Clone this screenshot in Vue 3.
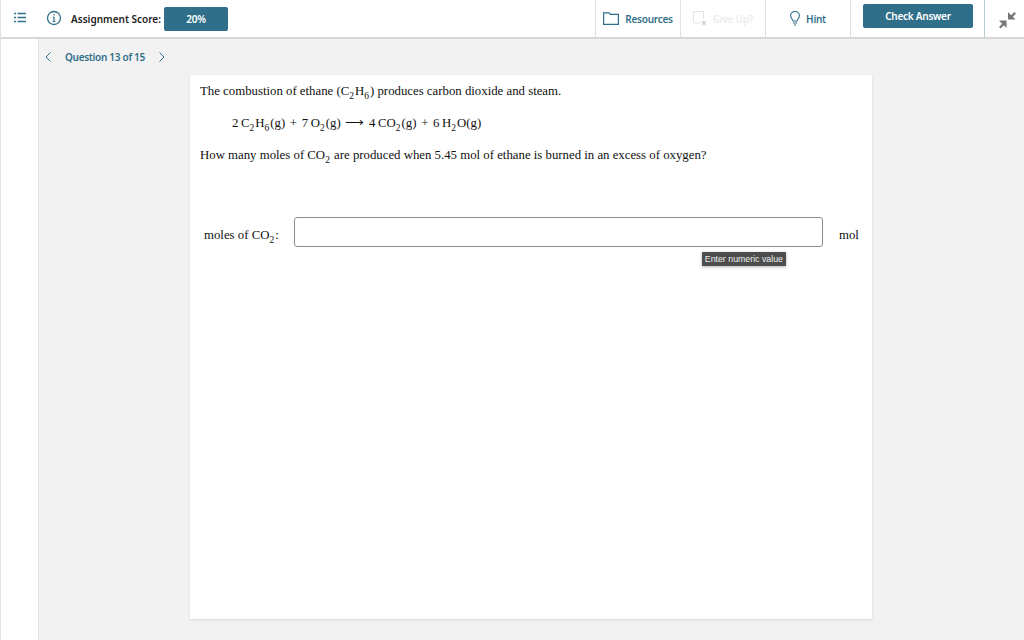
<script setup>
const tools = [
  { name: 'Resources', kind: 'folder', off: false },
  { name: 'Give Up?', kind: 'giveup', off: true },
  { name: 'Hint', kind: 'bulb', off: false }
]
</script>

<template>
  <div class="page">
    <header class="topbar">
      <div class="menu">
        <svg width="12" height="11" viewBox="0 0 12 11" fill="none" stroke="#2f6f8a" stroke-width="1.3">
          <path d="M0 1.500h2M3.500 1.500H12M0 5.500h2M3.500 5.500H12M0 9.500h2M3.500 9.500H12" />
        </svg>
      </div>
      <div class="score">
        <svg class="info" width="16" height="16" viewBox="0 0 16 16" fill="none" stroke="#2f6f8a">
          <circle cx="8" cy="8" r="6.500" stroke-width="1.300" />
          <path d="M8 7v4.500M6.600 11.500h2.800M6.800 7H8" stroke-width="1.200" />
          <circle cx="8" cy="4.700" r="0.800" fill="#2f6f8a" stroke="none" />
        </svg>
        <span class="score-label">Assignment Score:</span>
        <span class="score-value">20%</span>
      </div>
      <nav class="tools">
        <div v-for="t in tools" :key="t.name" class="tool" :class="{ off: t.off }">
          <svg v-if="t.kind === 'folder'" width="16" height="13" viewBox="0 0 16 13" fill="none" stroke="#2f6f8a" stroke-width="1.200">
            <path d="M.6 12.400V.8h5.600l1.200 1.600h8v10z" />
          </svg>
          <svg v-else-if="t.kind === 'giveup'" width="14" height="15" viewBox="0 0 14 15" fill="none" stroke="#e4e4e4" stroke-width="1">
            <path d="M8 12H.5V.5h10V8" />
            <path d="M9 10l4 4M13 10l-4 4" stroke="#d0d0d0" stroke-width="1.200" />
          </svg>
          <svg v-else width="10" height="15" viewBox="0 0 10 15" fill="none" stroke="#2f6f8a" stroke-width="1.100">
            <path d="M3 10C2.600 8 .6 7 .6 4.600a4.400 4.200 0 0 1 8.800 0C9.400 7 7.400 8 7 10z" />
            <path d="M3 12h4M4 14h2" />
          </svg>
          <span>{{ t.name }}</span>
        </div>
      </nav>
      <div class="check-wrap">
        <button class="check">Check Answer</button>
      </div>
      <div class="collapse">
        <svg width="20" height="20" viewBox="0 0 20 20" fill="#777">
          <path d="M11 2v7.500h7.500l-2.700-2.700L19 3.600 17.400 2l-3.200 3.200L11 2z" />
          <path d="M9.500 10.500V18L6.800 15.300 3.600 18.500 2 16.900l3.200-3.200L2 10.500z" />
        </svg>
      </div>
    </header>

    <div class="body">
      <aside class="side"></aside>
      <main class="main">
        <div class="pager">
          <svg width="6" height="10" viewBox="0 0 6 10" fill="none" stroke="#2f6f8a"><path d="M5.500.5L1 5l4.500 4.500" /></svg>
          <span class="pager-text">Question 13 of 15</span>
          <svg width="6" height="10" viewBox="0 0 6 10" fill="none" stroke="#2f6f8a"><path d="M.5.5L5 5 .5 9.500" /></svg>
        </div>
        <section class="card">
          <p class="intro">The combustion of ethane (C<sub>2</sub>H<sub>6</sub>) produces carbon dioxide and steam.</p>
          <p class="equation">2&#8201;C<sub>2</sub>H<sub>6</sub>(g) + 7&#8201;O<sub>2</sub>(g) <span class="arrow">&#10230;</span> 4&#8201;CO<sub>2</sub>(g) + 6&#8201;H<sub>2</sub>O(g)</p>
          <p class="ask">How many moles of CO<sub>2</sub> are produced when 5.45 mol of ethane is burned in an excess of oxygen?</p>
          <div class="answer">
            <span class="answer-label">moles of CO<sub>2</sub>:</span>
            <div class="field">
              <input class="input" type="text" />
              <span class="tip">Enter numeric value</span>
            </div>
            <span class="unit">mol</span>
          </div>
        </section>
      </main>
    </div>
  </div>
</template>

<style>
body {
  margin: 0;
  background: #fff;
}
</style>

<style scoped>
.page {
  width: 1024px;
  height: 640px;
  overflow: hidden;
  display: flex;
  flex-direction: column;
  font-family: "Noto Sans", "Open Sans", sans-serif;
  box-sizing: border-box;
  border-left: 1px solid #e2e2e2;
}

.topbar {
  height: 39px;
  flex: none;
  display: flex;
  box-sizing: border-box;
  border-bottom: 2px solid #d8d8d8;
}

.menu {
  width: 37px;
  flex: none;
  display: flex;
  align-items: center;
  justify-content: center;
  padding-bottom: 2px;
  box-sizing: border-box;
}

.score {
  display: flex;
  align-items: center;
  padding-left: 8px;
  width: 557px;
  flex: none;
  box-sizing: border-box;
}

.info {
  margin-right: 9px;
  margin-bottom: 2px;
}

.score-label {
  font-size: 10px;
  font-weight: 600;
  color: #222;
}

.score-value {
  width: 64px;
  height: 24px;
  margin-left: 3px;
  background: #2f6f8a;
  color: #fff;
  font-size: 10px;
  letter-spacing: -0.2px;
  font-weight: 600;
  border-radius: 2px;
  display: flex;
  align-items: center;
  justify-content: center;
}

.tools {
  display: flex;
}

.tool {
  width: 85px;
  height: 37px;
  display: flex;
  align-items: center;
  justify-content: center;
  gap: 6px;
  border-left: 1px solid #e2e2e2;
  font-size: 10px;
  letter-spacing: -0.25px;
  font-weight: 600;
  color: #2f6f8a;
  box-sizing: border-box;
}

.tool:last-child {
  border-right: 1px solid #e2e2e2;
  width: 86px;
}

.tool.off {
  color: #ececec;
}

.check-wrap {
  width: 133px;
  flex: none;
  padding: 4px 0 0 12px;
  box-sizing: border-box;
}

.check {
  width: 110px;
  height: 24px;
  display: block;
  padding: 0;
  border: none;
  border-radius: 2px;
  background: #2f6f8a;
  color: #fff;
  font-family: inherit;
  font-size: 10px;
  letter-spacing: -0.25px;
  font-weight: 600;
}

.collapse {
  flex: 1;
  border-left: 1px solid #b9cdd6;
  display: flex;
  align-items: center;
  justify-content: center;
  padding: 2px 0 0 4px;
}

.body {
  flex: 1;
  display: flex;
  min-height: 0;
}

.side {
  width: 37px;
  flex: none;
  border-right: 1px solid #e6e6e6;
}

.main {
  flex: 1;
  background: #f2f2f2;
  padding: 0 152px 21px 151px;
  display: flex;
  flex-direction: column;
}

.pager {
  height: 35px;
  margin-left: -145px;
  margin-bottom: 1px;
  display: flex;
  align-items: center;
  gap: 14px;
  flex: none;
}

.pager-text {
  font-size: 10px;
  letter-spacing: -0.3px;
  font-weight: 600;
  color: #2f6f8a;
}

.card {
  flex: 1;
  background: #fff;
  box-shadow: 0 1px 2px rgba(0, 0, 0, 0.12);
  padding: 8px 10px 0;
  font-family: "Liberation Serif", serif;
  font-size: 12.800px;
  color: #111;
  box-sizing: border-box;
}

.card p {
  margin: 0;
  line-height: 16px;
}

sub {
  font-size: 9.500px;
  line-height: 0;
  margin-right: 1px;
}

.equation {
  margin: 16px 0 0 32px !important;
  word-spacing: 1.500px;
}

.arrow {
  font-size: 13px;
}

.ask {
  margin-top: 16px !important;
}

.answer {
  display: flex;
  margin-top: 54px;
}

.answer-label {
  width: 90px;
  margin-left: 4px;
  flex: none;
  padding-top: 11px;
}

.field {
  width: 529px;
  flex: none;
  position: relative;
}

.input {
  width: 100%;
  height: 30px;
  display: block;
  box-sizing: border-box;
  border: 1px solid #8c8c8c;
  border-radius: 3px;
  background: #fff;
}

.tip {
  position: absolute;
  right: 37px;
  top: 35px;
  height: 14px;
  padding: 0 3px;
  background: #4d4d4d;
  color: #eee;
  font-family: "Liberation Sans", sans-serif;
  font-size: 8.800px;
  line-height: 14px;
  white-space: nowrap;
  box-shadow: 0 1px 3px rgba(0, 0, 0, 0.3);
}

.unit {
  margin-left: 16px;
  padding-top: 11px;
}
</style>
